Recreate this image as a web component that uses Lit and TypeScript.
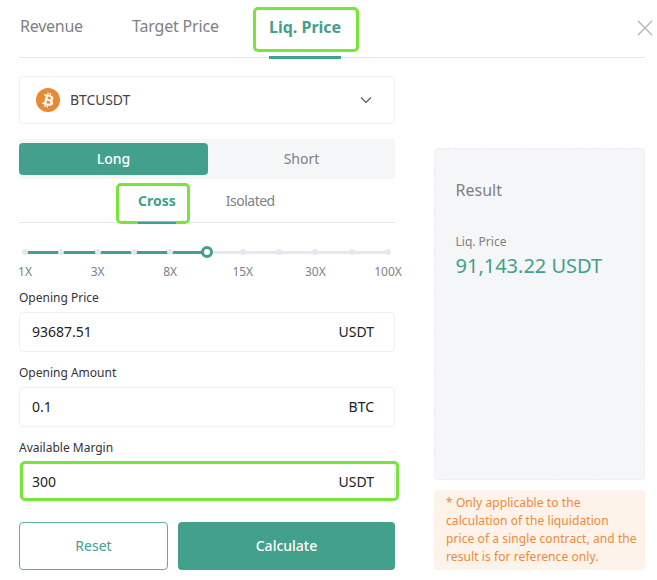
import { LitElement, html, css } from "lit";
import { customElement } from "lit/decorators.js";

const TEAL = css`#42a08c`;
const dots = [0, 1, 2, 3, 4, 6, 7, 8, 9, 10];
const marks = ["1X", "3X", "8X", "15X", "30X", "100X"];

@customElement("app-root")
export class AppRoot extends LitElement {
  static styles = css`
    :host { display: block; width: 657px; height: 580px; overflow: hidden; background: #fff;
      font-family: "Noto Sans", "Open Sans", sans-serif; color: #333; box-sizing: border-box; }
    * { box-sizing: border-box; }
    .page { padding: 0 12px 0 19px; }
    .tabs { position: relative; display: flex; height: 58px; border-bottom: 1px solid #e6e6e8; font-size: 16px; color: #808084; }
    .tab { position: relative; padding-top: 15px; line-height: 22px; white-space: nowrap; }
    .tab.t1 { width: 113px; padding-left: 1px; letter-spacing: -0.25px; }
    .tab.t2 { width: 137px; letter-spacing: -0.18px; }
    .tab.active { color: ${TEAL}; font-weight: 700; height: 58px; padding-top: 16px; }
    .tab.active::after { content: ""; position: absolute; left: 0; right: 0; bottom: -1px; height: 3px; background: ${TEAL}; }
    .hl { position: absolute; border: 3px solid #78e53c; border-radius: 5px; pointer-events: none; }
    .hl.liq { left: -16px; right: -18px; top: 7px; height: 45px; }
    .hl.cross { left: -22px; right: -14px; top: 4px; height: 41px; }
    .close { position: absolute; right: -8px; top: 20px; width: 16px; height: 16px; }
    .body { display: grid; grid-template-columns: 376px 211px; column-gap: 39px; }
    .left { display: flex; flex-direction: column; padding-top: 18px; }
    .select { display: flex; align-items: center; height: 48px; border: 1px solid #f0f0f2; border-radius: 4px; padding: 0 22px 0 16px; font-size: 14px; color: #444; }
    .select svg.coin { margin-right: 10px; }
    .select span { flex: 1; padding-bottom: 2px; letter-spacing: -0.1px; }
    .seg { display: flex; height: 40px; margin-top: 15px; padding: 4px 0; background: #f5f6f8; font-size: 14px; color: #808084; }
    .seg div { display: flex; align-items: center; justify-content: center; flex: 1; padding-bottom: 2px; }
    .seg .on { flex: 0 0 189px; background: ${TEAL}; color: #fff; border-radius: 4px; font-weight: 500; }
    .subs { display: flex; height: 44px; border-bottom: 1px solid #e6e6e8; padding-left: 119px; font-size: 14px; color: #808084; }
    .sub { position: relative; padding-top: 12px; line-height: 20px; letter-spacing: -0.5px; }
    .sub.on { color: ${TEAL}; font-weight: 700; margin-right: 50px; height: 44px; letter-spacing: 0; }
    .sub.on::after { content: ""; position: absolute; left: 0; right: 0; bottom: -1px; height: 2px; background: ${TEAL}; }
    .slider { position: relative; height: 12px; margin-top: 23px; margin-left: 6px; width: 363px; }
    .rail { position: absolute; left: 0; right: 0; top: 4.5px; height: 3px; background: #e6e8ef; }
    .fill { position: absolute; left: 0; width: 182px; top: 4.5px; height: 3px; background: ${TEAL}; }
    .dot { position: absolute; top: 3px; width: 6px; height: 6px; margin-left: -3px; border-radius: 50%; background: #e6e8ef; }
    .thumb { position: absolute; top: 0; left: 176px; width: 12px; height: 12px; border-radius: 50%; border: 3px solid ${TEAL}; background: #fff; }
    .marks { display: flex; margin-top: 6px; margin-left: -30.3px; font-size: 12px; line-height: 16px; color: #808084; }
    .marks span { flex: 0 0 72.6px; text-align: center; white-space: nowrap; }
    .field { margin-top: 9px; }
    .field + .field { margin-top: 12px; }
    .field label { display: block; font-size: 12px; line-height: 17px; color: #333; margin-bottom: 6px; }
    .inp { position: relative; display: flex; justify-content: space-between; align-items: center; height: 40px; border: 1px solid #f0f0f2; border-radius: 4px; padding: 0 20px 2px 12px; font-size: 14px; color: #222; }
    .inp .hl { left: 0; right: -5px; top: -2px; bottom: 0; }
    .btns { display: flex; gap: 10px; margin-top: 20px; height: 48px; }
    .btn { display: flex; align-items: center; justify-content: center; border-radius: 4px; font-size: 14px; padding-bottom: 2px; }
    .reset { width: 149px; border: 1px solid #5fae9c; color: ${TEAL}; }
    .calc { flex: 1; background: ${TEAL}; color: #fff; font-weight: 500; }
    .right { display: flex; flex-direction: column; padding-top: 90px; gap: 10px; }
    .result { height: 332px; background: #f5f6f8; border: 1px dashed #ebecef; border-radius: 4px; padding: 29px 21px 29px 20.5px; }
    .result h3 { margin: 0; font-weight: 400; font-size: 16px; line-height: 24px; color: #808084; }
    .result .k { margin-top: 32px; font-size: 12px; line-height: 16px; color: #808084; }
    .result .v { margin-top: 2px; font-size: 20px; line-height: 28px; color: ${TEAL}; white-space: nowrap; }
    .note { height: 80px; background: #fdf3ea; border-radius: 4px; padding: 4px 8px 4px 12px; font-size: 12px; line-height: 18px; color: #ec8a3c; letter-spacing: 0.08px; }
  `;

  render() {
    return html`<div class="page">
      <div class="tabs">
        <div class="tab t1">Revenue</div>
        <div class="tab t2">Target Price</div>
        <div class="tab active">Liq. Price<div class="hl liq"></div></div>
        <svg class="close" viewBox="0 0 16 16" fill="none" stroke="#b4b4b8" stroke-width="1.4"><path d="M1 1 15 15M15 1 1 15"/></svg>
      </div>
      <div class="body">
        <div class="left">
          <div class="select">
            <svg class="coin" width="24" height="24" viewBox="0 0 24 24"><circle cx="12" cy="12" r="12" fill="#e68a34"/>
              <path fill="#fff" fill-rule="evenodd" d="m17.41 10.59c.24-1.59-.97-2.45-2.63-3.02l.54-2.15-1.31-.33-.52 2.1c-.35-.09-.7-.17-1.05-.25l.53-2.11-1.31-.33-.54 2.15c-.29-.07-.57-.13-.84-.2l-1.81-.45-.35 1.4s.97.22.95.24c.53.13.63.48.61.76l-.61 2.45c.04.01.08.02.14.05l-.14-.04-.86 3.43c-.07.16-.23.4-.6.31.01.02-.95-.24-.95-.24l-.65 1.5 1.71.43c.32.08.63.16.93.24l-.54 2.18 1.31.33.54-2.16c.36.1.7.19 1.04.27l-.54 2.15 1.31.33.54-2.18c2.24.42 3.92.25 4.63-1.77.57-1.63-.03-2.57-1.2-3.18.85-.2 1.5-.76 1.67-1.92zm-3 4.21c-.41 1.63-3.16.75-4.05.53l.72-2.89c.89.22 3.75.66 3.33 2.36zm.41-4.23c-.37 1.48-2.66.73-3.4.54l.65-2.62c.74.19 3.14.53 2.75 2.08z"/></svg>
            <span>BTCUSDT</span>
            <svg width="12" height="8" viewBox="0 0 12 8" fill="none" stroke="#555" stroke-width="1.1"><path d="M1 1.5 6 6.5 11 1.5"/></svg>
          </div>
          <div class="seg"><div class="on">Long</div><div>Short</div></div>
          <div class="subs"><div class="sub on">Cross<div class="hl cross"></div></div><div class="sub">Isolated</div></div>
          <div class="slider">
            <div class="rail"></div><div class="fill"></div>
            ${dots.map((i) => html`<div class="dot" style="left:${i * 36.3}px"></div>`)}
            <div class="thumb"></div>
          </div>
          <div class="marks">${marks.map((m) => html`<span>${m}</span>`)}</div>
          <div class="field"><label>Opening Price</label><div class="inp"><span>93687.51</span><span>USDT</span></div></div>
          <div class="field"><label>Opening Amount</label><div class="inp"><span>0.1</span><span>BTC</span></div></div>
          <div class="field"><label>Available Margin</label><div class="inp"><span>300</span><span>USDT</span><div class="hl"></div></div></div>
          <div class="btns"><div class="btn reset">Reset</div><div class="btn calc">Calculate</div></div>
        </div>
        <div class="right">
          <div class="result"><h3>Result</h3><div class="k">Liq. Price</div><div class="v">91,143.22 USDT</div></div>
          <div class="note">* Only applicable to the calculation of the liquidation price of a single contract, and the result is for reference only.</div>
        </div>
      </div>
    </div>`;
  }
}
